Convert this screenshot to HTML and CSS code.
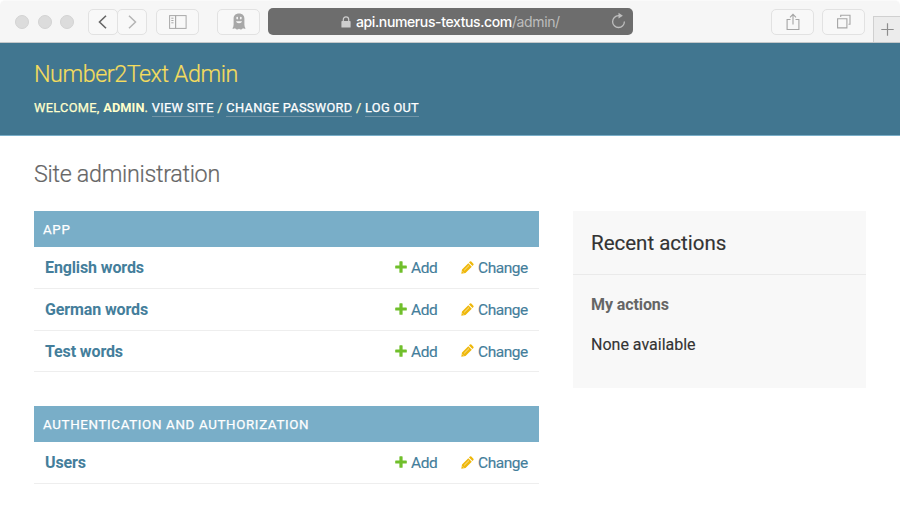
FILE: index.html
```html
<!DOCTYPE html>
<html lang="en">
<head>
<meta charset="utf-8">
<title>Site administration</title>
<link rel="stylesheet" href="styles.css">
</head>
<body>
<svg class="defs" width="0" height="0" aria-hidden="true">
  <symbol id="plus" viewBox="0 0 12 12"><path d="M4.400.8q0-.6.6-.6h2q.6 0 .6.6v3.600h3.600q.6 0 .6.6v1.900q0 .6-.6.6H7.600v3.700q0 .6-.6.6H5q-.6 0-.6-.6V7.500H.8q-.6 0-.6-.6V5q0-.6.6-.6h3.600z" fill="#70bf2b"/></symbol>
  <symbol id="pencil" viewBox="0 0 13 13"><path d="M.3 12.700 1 8.500 7.300 2.200l3.500 3.500-6.300 6.300zM8 1.500l.9-.9q.7-.6 1.400 0l2.100 2.100q.6.7 0 1.400l-.9.900z" fill="#efb80b"/><path d="M3.200 9.300 8 4.500M1.600 10.500l1 1" stroke="#fff" stroke-width=".6" fill="none"/></symbol>
</svg>
<div class="toolbar">
  <div class="lights"><i></i><i></i><i></i></div>
  <div class="nav">
    <span class="btn"><svg width="29" height="26" viewBox="0 0 29 26"><path d="M17 6.700 10.500 13l6.500 6.300" fill="none" stroke="#666" stroke-width="1.600"/></svg></span>
    <span class="btn"><svg width="29" height="26" viewBox="0 0 29 26"><path d="M11 6.700 17.500 13l-6.500 6.300" fill="none" stroke="#b4b4b4" stroke-width="1.500"/></svg></span>
  </div>
  <span class="btn sidebar"><svg width="18" height="14" viewBox="0 0 18 14"><g fill="none" stroke="#a8a8a8"><rect x=".6" y=".6" width="16.500" height="12.800"/><path d="M6.600.6v12.800" stroke-width="1.200"/><path d="M2.300 3.200h2.200M2.300 5.500h2.200M2.300 7.800h2.200"/></g></svg></span>
  <span class="btn ghost"><svg width="14" height="17" viewBox="0 0 14 17"><path d="M7 .5c3.500 0 5.400 2.200 5.400 5v6.200c0 1.500.4 2.700 1.200 3.700-.9.400-1.800.3-2.700-.2-.5.800-1.300 1.200-2.100 1.200-.7 0-1.400-.2-1.800-.7-.4.500-1.100.7-1.800.7-.8 0-1.600-.4-2.100-1.200-.9.500-1.800.6-2.700.2.800-1 1.200-2.200 1.200-3.700V5.500c0-2.800 1.900-5 5.400-5z" fill="#a8a8a8"/><ellipse cx="5.200" cy="5.100" rx=".9" ry="1.300" fill="#f6f6f6"/><ellipse cx="8.800" cy="5.100" rx=".9" ry="1.300" fill="#f6f6f6"/><path d="M4 8.300h6c-.3 1.300-1.400 2-3 2s-2.700-.7-3-2z" fill="#f6f6f6"/></svg></span>
  <div class="address">
    <svg class="lock" width="10" height="12" viewBox="0 0 10 12"><path d="M2.300 6V3.600C2.300 2 3.300.8 5 .8s2.700 1.200 2.700 2.800V6" fill="none" stroke="#cecece" stroke-width="1.200"/><rect x=".4" y="5.100" width="9.200" height="6.500" rx=".7" fill="#cecece"/></svg>
    <span class="url">api.numerus-textus.com<span class="path">/admin/</span></span>
    <svg class="reload" width="15" height="17" viewBox="0 0 15 17"><path d="M8.200 3.700H7.500A5.900 5.900 0 1 0 13.400 9.500" fill="none" stroke="#bebebe" stroke-width="1.300"/><path d="M7.500.8 11.900 3.700 7.500 6.500z" fill="#bebebe"/></svg>
  </div>
  <span class="btn share"><svg width="14" height="18" viewBox="0 0 14 18"><path d="M4.500 6.500H1.100v10h11.800v-10H9.500M7 11.500V1.500M4 4.300l3-3 3 3" fill="none" stroke="#a5a5a5" stroke-width="1.100"/></svg></span>
  <span class="btn tabs"><svg width="14" height="15" viewBox="0 0 14 15"><path d="M.6 4.700h9.300v9.200H.6zM3.700 2.900V1.200H13v9.100h-1.500" fill="none" stroke="#a5a5a5" stroke-width="1.100"/></svg></span>
  <span class="newtab"><svg width="13" height="13" viewBox="0 0 13 13"><path d="M6.500.3v12.400M.3 6.500h12.400" stroke="#8d8d8d" stroke-width="1.200"/></svg></span>
</div>
<header class="header">
  <h1 class="brand">Number2Text Admin</h1>
  <div class="user-tools">Welcome, <strong>admin</strong>. <a>View site</a> / <a>Change password</a> / <a>Log out</a></div>
</header>
<main class="content">
  <h1 class="title">Site administration</h1>
  <div class="columns">
    <div class="apps">
      <section class="module">
        <h2 class="caption">App</h2>
        <div class="row"><a class="model">English words</a><a class="add"><svg width="12" height="12"><use href="#plus"/></svg>Add</a><a class="change"><svg width="13" height="13"><use href="#pencil"/></svg>Change</a></div>
        <div class="row"><a class="model">German words</a><a class="add"><svg width="12" height="12"><use href="#plus"/></svg>Add</a><a class="change"><svg width="13" height="13"><use href="#pencil"/></svg>Change</a></div>
        <div class="row"><a class="model">Test words</a><a class="add"><svg width="12" height="12"><use href="#plus"/></svg>Add</a><a class="change"><svg width="13" height="13"><use href="#pencil"/></svg>Change</a></div>
      </section>
      <section class="module">
        <h2 class="caption">Authentication and Authorization</h2>
        <div class="row"><a class="model">Users</a><a class="add"><svg width="12" height="12"><use href="#plus"/></svg>Add</a><a class="change"><svg width="13" height="13"><use href="#pencil"/></svg>Change</a></div>
      </section>
    </div>
    <aside class="recent">
      <h2>Recent actions</h2>
      <h3>My actions</h3>
      <p>None available</p>
    </aside>
  </div>
</main>
</body>
</html>
```
FILE: styles.css
```css
* { box-sizing: border-box; }
body { margin: 0; background: #fff; color: #333; font: 16px/20px Roboto, sans-serif; overflow: hidden; }
h1, h2, h3, p { margin: 0; font-weight: 400; }
svg { display: block; flex: none; }
.defs { position: absolute; }

.toolbar { display: flex; align-items: center; height: 43px; padding-left: 15px; background: #f6f6f6; border-top: 1px solid #fafafa; border-bottom: 1px solid #c4c8ca; border-radius: 5px 5px 0 0; }
.lights { display: flex; gap: 8.500px; width: 73px; }
.lights i { width: 14px; height: 14px; border-radius: 50%; background: #dcdcdc; border: 1px solid #d3d3d3; }
.btn { display: flex; align-items: center; justify-content: center; width: 43px; height: 26px; border: 1px solid #e2e2e2; border-radius: 5px; background: #f8f8f8; }
.nav { display: flex; }
.nav .btn { width: 30px; }
.nav .btn + .btn { margin-left: -1px; }
.sidebar { margin-left: 9px; }
.ghost { margin-left: 18px; }
.address { display: flex; align-items: center; width: 365.500px; height: 27px; margin-left: 7.500px; padding: 0 7px 0 73.500px; border-radius: 5px; background: #6d6d6d; }
.url { margin-left: 5px; color: #fff; font: 500 14px/20px Inter, sans-serif; letter-spacing: -.38px; white-space: nowrap; padding-top: 1px; }
.path { color: #bdbdbd; font-weight: 400; }
.reload { margin: -2px 0 0 auto; }
.share { margin-left: 138px; }
.tabs { margin-left: 8px; }
.newtab { display: flex; align-items: center; justify-content: center; align-self: flex-end; width: 27px; height: 26px; margin-left: auto; background: #ececec; border: 1px solid #d0d0d0; border-width: 1px 0 0 1px; }

.header { height: 93px; padding: 17px 34px 0; background: #417690; border-bottom: 1px solid #79aec8; color: #ffc; }
.brand { color: #f5dd5d; font-size: 23.300px; line-height: 28px; font-weight: 300; letter-spacing: -.44px; -webkit-text-stroke: .2px; }
.user-tools { margin-top: 11px; font-size: 12.800px; line-height: 17px; font-weight: 400; letter-spacing: .31px; text-transform: uppercase; white-space: nowrap; -webkit-text-stroke: .25px; }
.user-tools strong { -webkit-text-stroke: 0; letter-spacing: .1px; }
.user-tools a { display: inline-block; color: #fff; border-bottom: 1px solid #7195a8; }

.content { padding: 23px 34px 0; }
.title { color: #666; font-size: 23.300px; line-height: 30px; font-weight: 300; letter-spacing: -.29px; -webkit-text-stroke: .2px; }
.columns { display: flex; align-items: flex-start; gap: 34px; margin-top: 22px; }
.apps { width: 505px; }
.module { margin-bottom: 33.600px; }
.caption { height: 36px; padding: 1px 9px 0; background: #79aec8; color: #fff; font-size: 13.300px; line-height: 36px; font-weight: 400; letter-spacing: .67px; text-transform: uppercase; -webkit-text-stroke: .25px; }
.row { display: flex; align-items: center; height: 41.800px; padding: 2px 11px 0; border-bottom: 1px solid #eee; color: #447e9b; }
.model { flex: 1; font-weight: 700; letter-spacing: -.12px; }
.add, .change { display: flex; align-items: center; gap: 4.500px; font-size: 15.500px; letter-spacing: -.45px; -webkit-text-stroke: .15px; }
.add svg, .change svg { margin-top: -2px; }
.add { width: 66px; }
.change { width: 67.500px; }
.recent { flex: 1; height: 177px; background: #f8f8f8; }
.recent h2 { height: 64px; padding: 1px 18px 0; border-bottom: 1px solid #eaeaea; font-size: 20.500px; line-height: 62px; -webkit-text-stroke: .15px; }
.recent h3 { margin: 20px 18px 0; color: #666; font-size: 16px; font-weight: 700; letter-spacing: -.1px; }
.recent p { margin: 20px 18px 0; -webkit-text-stroke: .15px; }
```
